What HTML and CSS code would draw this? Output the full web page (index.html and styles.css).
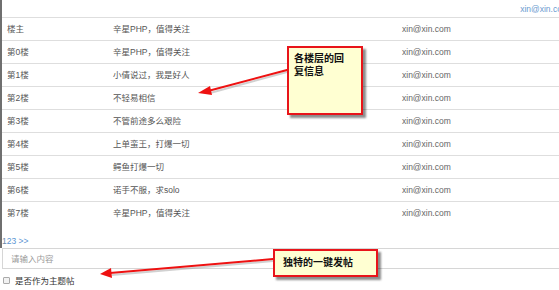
FILE: index.html
```html
<!DOCTYPE html>
<html lang="zh">
<head>
<meta charset="utf-8">
<link rel="stylesheet" href="styles.css">
</head>
<body>
<div class="page">
  <div class="main">
    <div class="topbar"><a class="user">xin@xin.com</a></div>
    <table class="posts">
      <colgroup><col class="c1"><col class="c2"><col class="c3"></colgroup>
      <tbody>
        <tr><td>楼主</td><td>辛星PHP，值得关注</td><td class="mail">xin@xin.com</td></tr>
        <tr><td>第0楼</td><td>辛星PHP，值得关注</td><td class="mail">xin@xin.com</td></tr>
        <tr><td>第1楼</td><td>小倩说过，我是好人</td><td class="mail">xin@xin.com</td></tr>
        <tr><td>第2楼</td><td>不轻易相信</td><td class="mail">xin@xin.com</td></tr>
        <tr><td>第3楼</td><td>不管前途多么艰险</td><td class="mail">xin@xin.com</td></tr>
        <tr><td>第4楼</td><td>上单蛮王，打爆一切</td><td class="mail">xin@xin.com</td></tr>
        <tr><td>第5楼</td><td>鳄鱼打爆一切</td><td class="mail">xin@xin.com</td></tr>
        <tr><td>第6楼</td><td>诺手不服，求solo</td><td class="mail">xin@xin.com</td></tr>
        <tr><td>第7楼</td><td>辛星PHP，值得关注</td><td class="mail">xin@xin.com</td></tr>
      </tbody>
    </table>
    <div class="pager"><a class="cur">1</a><a>2</a><a>3</a> <a>&gt;&gt;</a></div>
  </div>
  <input class="reply" type="text" placeholder="请输入内容">
  <label class="topic"><input type="checkbox" class="chk"><span>是否作为主题帖</span></label>

  <svg class="arrows" width="559" height="290" viewBox="0 0 559 290">
    <g stroke="#9a9a9a" stroke-width="2" opacity="0.45" fill="none">
      <line x1="287" y1="72" x2="210" y2="93"/>
      <line x1="273" y1="261" x2="112" y2="275"/>
    </g>
    <g stroke="#ee1111" stroke-width="2" fill="none" stroke-linecap="round">
      <line x1="287" y1="70" x2="208" y2="91"/>
      <line x1="273" y1="259" x2="110" y2="273"/>
    </g>
    <g fill="#ee1111">
      <polygon points="198,93 210,86 212,95"/>
      <polygon points="100,274 111,268 112,278"/>
    </g>
  </svg>
  <div class="note note1">各楼层的回复信息</div>
  <div class="note note2">独特的一键发帖</div>
</div>
</body>
</html>
```
FILE: styles.css
```css
html, body {
  margin: 0;
  padding: 0;
  background: #fff;
  overflow: hidden;
}
body {
  width: 559px;
  height: 290px;
  font-family: "Liberation Sans", "Noto Sans CJK SC", sans-serif;
  font-size: 8.5px;
  color: #555;
}
.page {
  position: relative;
  width: 559px;
  height: 290px;
}
.main {
  border-left: 2px solid #6f6f6f;
  height: 248px;
  box-sizing: border-box;
}
.topbar {
  height: 17px;
  display: flex;
  justify-content: flex-end;
  align-items: center;
  padding-top: 1px;
  box-sizing: border-box;
}
.user {
  color: #6b9bd0;
  white-space: nowrap;
  margin-right: -10px;
}
.posts {
  width: 557px;
  border-collapse: collapse;
  table-layout: fixed;
}
.c1 { width: 111px; }
.c2 { width: 289px; }
.posts td {
  height: 22px;
  padding: 0;
  border-top: 1px solid #dedede;
  vertical-align: middle;
  white-space: nowrap;
  line-height: 12px;
}
.posts td:first-child {
  padding-left: 5px;
}
.posts .mail {
  color: #666;
}
.pager {
  margin-top: 11px;
  line-height: 12px;
  color: #5b95d3;
}
.pager a { color: #5b95d3; }
.pager .cur { color: #6d8aa8; }
.reply {
  display: block;
  box-sizing: border-box;
  width: 566px;
  height: 21px;
  margin: 0 0 0 2px;
  border: 1px solid #d6d6d6;
  padding: 0 0 0 8px;
  font-family: "Liberation Sans", "Noto Sans CJK SC", sans-serif;
  font-size: 8.5px;
  color: #555;
  outline: none;
  background: #fff;
}
.reply::placeholder { color: #9a9a9a; }
.topic {
  display: flex;
  align-items: center;
  height: 22px;
  padding-left: 3px;
  color: #333;
}
.chk {
  appearance: none;
  -webkit-appearance: none;
  width: 7px;
  height: 7px;
  margin: 0 5px 0 0;
  border: 1px solid #aaa;
  border-radius: 1px;
  background: #f2f2f2;
}
.arrows {
  position: absolute;
  left: 0;
  top: 0;
  pointer-events: none;
}
.note {
  position: absolute;
  box-sizing: border-box;
  border: 2px solid #e8141a;
  background: #ffffd2;
  box-shadow: 3px 3px 2px rgba(0, 0, 0, 0.45);
  color: #111;
  font-weight: bold;
  font-size: 10px;
  line-height: 13px;
  font-family: "Noto Sans CJK SC", sans-serif;
}
.note1 {
  left: 287px;
  top: 46px;
  width: 76px;
  height: 69px;
  padding: 3px 12px 0 5px;
}
.note2 {
  left: 273px;
  top: 249px;
  width: 105px;
  height: 28px;
  padding: 4px 0 0 8px;
  white-space: nowrap;
}
```
